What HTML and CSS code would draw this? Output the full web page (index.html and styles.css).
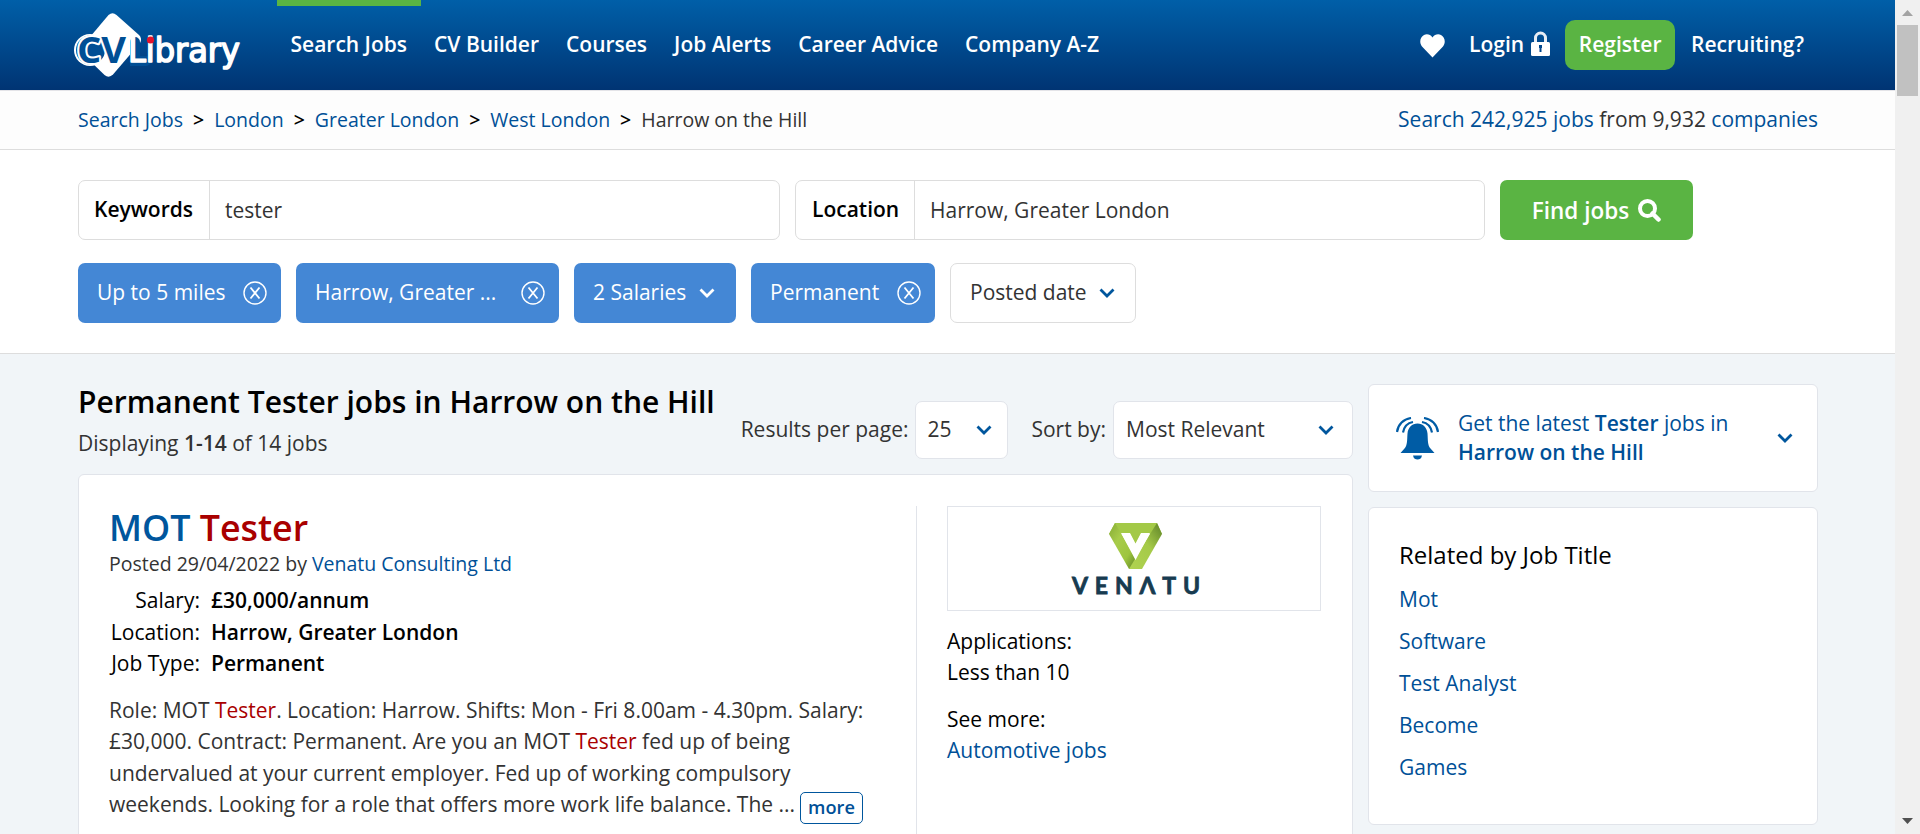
FILE: index.html
```
<!DOCTYPE html>
<html lang="en">
<head>
<meta charset="utf-8">
<title>Permanent Tester jobs in Harrow on the Hill</title>
<link rel="stylesheet" href="styles.css">
</head>
<body>
<svg width="0" height="0" class="defs">
  <symbol id="chev" viewBox="0 0 16 10"><path d="M1.500 1.500 8 8l6.500-6.500" fill="none" stroke="currentColor" stroke-width="2.800"/></symbol>
  <symbol id="close" viewBox="0 0 24 24"><circle cx="12" cy="12" r="11" fill="none" stroke="currentColor" stroke-width="1.400"/><path d="M7.500 6.500 16.500 17.500M16.500 6.500 7.500 17.500" stroke="currentColor" stroke-width="1.800"/></symbol>
</svg>
<div class="page">
  <header class="header">
    <div class="wrap header-row">
      <a class="logo">
        <svg width="172" height="68" viewBox="0 0 172 68">
          <path d="M34.500 2Q38.500-1.500 42.500 2L65 22Q68.500 25.500 66 30L39 61.500Q35 65.500 30.500 62L14 46 16 24Z" fill="#fff"/>
          <circle cx="16" cy="37" r="16" fill="#fff"/>
          <circle cx="16.500" cy="37" r="14.500" fill="#004f95"/>
          <path d="M61 29V48H72" fill="none" stroke="#004f95" stroke-width="10" stroke-linecap="round"/>
          <text x="3" y="49.500" class="logo-cv" textLength="49" lengthAdjust="spacingAndGlyphs">CV</text>
          <text x="54" y="49" class="logo-lib" textLength="112" lengthAdjust="spacingAndGlyphs">Library</text>
          <circle cx="76.500" cy="27" r="3.600" fill="#e2142d"/>
        </svg>
      </a>
      <nav class="nav">
        <a class="active">Search Jobs</a><a>CV Builder</a><a>Courses</a><a>Job Alerts</a><a>Career Advice</a><a>Company A-Z</a>
      </nav>
      <div class="account">
        <svg class="heart" width="25" height="24" viewBox="0 0 25 24"><path d="M12.500 23.500 2 12.500C-1 9 0 3 4 1c3-1.500 6.500-.5 8.500 2.500C14.500.5 18-.5 21 1c4 2 5 8 2 11.500Z" fill="#fff"/></svg>
        <a class="login">Login</a>
        <svg class="lock" width="19" height="25" viewBox="0 0 19 25"><path d="M4.500 12V7a5 5 0 0 1 10 0v5" fill="none" stroke="#e8edf5" stroke-width="3"/><rect y="11" width="19" height="14" rx="1.500" fill="#fff"/><path d="M8 14h3v3h-.5v4h-2v-4H8Z" fill="#00458b"/></svg>
        <a class="register">Register</a>
        <a>Recruiting?</a>
      </div>
    </div>
  </header>

  <div class="crumbs">
    <div class="wrap crumbs-row">
      <div class="trail"><a>Search Jobs</a><i>&gt;</i><a>London</a><i>&gt;</i><a>Greater London</a><i>&gt;</i><a>West London</a><i>&gt;</i><span>Harrow on the Hill</span></div>
      <div class="totals"><a>Search 242,925 jobs</a> from 9,932 <a>companies</a></div>
    </div>
  </div>

  <section class="search">
    <div class="wrap">
      <div class="fields">
        <div class="field keywords"><label>Keywords</label><span>tester</span></div>
        <div class="field location"><label>Location</label><span>Harrow, Greater London</span></div>
        <button class="find">Find jobs <svg width="23" height="23" viewBox="0 0 23 23"><circle cx="9.500" cy="9.500" r="7.500" fill="none" stroke="#fff" stroke-width="4"/><path d="M14.500 14.500 20.500 20.500" stroke="#fff" stroke-width="4.500" stroke-linecap="round"/></svg></button>
      </div>
      <div class="chips">
        <div class="chip c1">Up to 5 miles<svg class="x"><use href="#close"/></svg></div>
        <div class="chip c2">Harrow, Greater ...<svg class="x"><use href="#close"/></svg></div>
        <div class="chip c3">2 Salaries<svg class="v"><use href="#chev"/></svg></div>
        <div class="chip c4">Permanent<svg class="x"><use href="#close"/></svg></div>
        <div class="chip c5">Posted date<svg class="v"><use href="#chev"/></svg></div>
      </div>
    </div>
  </section>

  <main class="wrap main">
    <div class="results">
      <div class="results-head">
        <div>
          <h1>Permanent Tester jobs in Harrow on the Hill</h1>
          <p class="count">Displaying <b>1-14</b> of 14 jobs</p>
        </div>
        <div class="sorting">
          <span class="per">Results per page:</span><div class="select s1">25<svg class="v"><use href="#chev"/></svg></div>
          <span class="by">Sort by:</span><div class="select s2">Most Relevant<svg class="v"><use href="#chev"/></svg></div>
        </div>
      </div>
      <article class="job">
        <div class="job-main">
          <h2>MOT <mark>Tester</mark></h2>
          <p class="posted">Posted 29/04/2022 by <a>Venatu Consulting Ltd</a></p>
          <dl><dt>Salary:</dt><dd>£30,000/annum</dd><dt>Location:</dt><dd>Harrow, Greater London</dd><dt>Job Type:</dt><dd>Permanent</dd></dl>
          <div class="desc">Role: MOT <mark>Tester</mark>. Location: Harrow. Shifts: Mon - Fri 8.00am - 4.30pm. Salary:<br>£30,000. Contract: Permanent. Are you an MOT <mark>Tester</mark> fed up of being<br>undervalued at your current employer. Fed up of working compulsory<br>weekends. Looking for a role that offers more work life balance. The ...<a class="more">more</a></div>
        </div>
        <aside class="job-side">
          <div class="brand">
            <svg width="136" height="84" viewBox="0 0 136 84">
              <defs>
                <linearGradient id="ga" x1="0" y1="0" x2="1" y2="1"><stop offset="0" stop-color="#86ab35"/><stop offset=".35" stop-color="#a8cc4a"/><stop offset=".7" stop-color="#9dc53e"/><stop offset="1" stop-color="#5d8227"/></linearGradient>
                <linearGradient id="gb" x1="1" y1="0" x2="0" y2="1"><stop offset="0" stop-color="#5d8227"/><stop offset=".45" stop-color="#a5ca48"/><stop offset="1" stop-color="#b0d351"/></linearGradient>
              </defs>
              <path d="M49 2H91L96 13H43Z" fill="#a3c947"/>
              <path d="M49 2 43 13 63 48H70V38L55 12Z" fill="url(#ga)"/>
              <path d="M96 13 76 48H63L84 13 91 2Z" fill="url(#gb)"/>
              <path d="M63 11H76L69.500 24Z" fill="#a3c947"/>
              <path d="M55 12H64L69.500 22.500 75 12H84L69.500 39Z" fill="#fff"/>
              <text x="6" y="73" class="brand-name" textLength="128">VENΛTU</text>
            </svg>
          </div>
          <p>Applications:<br>Less than 10</p>
          <p>See more:<br><a>Automotive jobs</a></p>
        </aside>
      </article>
    </div>
    <div class="sidebar">
      <div class="alert">
        <svg width="43" height="43" viewBox="0 0 43 43" fill="none" stroke="#005ca5" stroke-width="2.200"><path d="M21.500 6.500c5.500 0 9.500 4 10 10 .5 7 0 11.500 3 15L38.500 36H4.500L8.500 31.500c3-3.500 2.500-8 3-15 .5-6 4.500-10 10-10Z" fill="#005ca5" stroke="none"/><path d="M17 38.500h9c-.5 3-2.500 4-4.500 4s-4-1-4.500-4Z" fill="#005ca5" stroke="none"/><path d="M1 15C2 7.500 7.500 2 15 1M7 15.500C8 10 11.500 6 17 5M42 15C41 7.500 35.500 2 28 1M36 15.500C35 10 31.500 6 26 5"/></svg>
        <div class="alert-text">Get the latest <b>Tester</b> jobs in<br><b>Harrow on the Hill</b></div>
        <svg class="v"><use href="#chev"/></svg>
      </div>
      <div class="related">
        <h3>Related by Job Title</h3>
        <a>Mot</a><a>Software</a><a>Test Analyst</a><a>Become</a><a>Games</a>
      </div>
    </div>
  </main>
</div>
<div class="scrollbar">
  <svg width="11" height="6" viewBox="0 0 11 6"><path d="M0 6 5.500 0 11 6Z" fill="#a3a3a3"/></svg>
  <div class="thumb"></div>
  <svg class="down" width="11" height="6" viewBox="0 0 11 6"><path d="M0 0 5.500 6 11 0Z" fill="#505050"/></svg>
</div>
</body>
</html>
```
FILE: styles.css
```
* { box-sizing: border-box; margin: 0; padding: 0; }
html { height: 834px; overflow: hidden; }
body { display: flex; height: 834px; overflow: hidden; font: 21px/31.25px "Open Sans", sans-serif; color: #333; }
.defs { position: absolute; }
a { color: #005097; text-decoration: none; }
b { font-weight: 600; }
svg { display: block; flex: none; }
mark { background: none; color: #a90000; }
.page { width: 1895px; height: 834px; overflow: hidden; background: #f1f5f8; }
.wrap { width: 1740px; margin-left: 78px; }

.header { height: 90px; background: linear-gradient(#005fa8, #003473); }
.header-row { display: flex; height: 90px; }
.header a { color: #fff; font-weight: 600; white-space: nowrap; }
.logo { width: 199px; padding-top: 13px; }
.logo svg { margin-left: -4px; overflow: visible; }
.logo-cv { font: 700 36px "Open Sans", sans-serif; fill: #004f95; stroke: #fff; stroke-width: 4px; stroke-linejoin: round; paint-order: stroke; }
.logo-lib { font: 33px "DejaVu Sans", sans-serif; fill: #fff; stroke: #fff; stroke-width: 1.600px; stroke-linejoin: round; }
.nav { display: flex; }
.nav a { padding: 29px 13.500px 0; border-top: 0 solid #5ab443; }
.nav a.active { border-top-width: 6px; padding-top: 23px; }
.account { display: flex; align-items: center; margin-left: auto; margin-right: 14px; }
.heart { margin: 2px 24px 0 0; }
.lock { margin: -3px 15px 0 7px; }
.register { height: 50px; width: 110px; margin-right: 16px; border-radius: 10px; background: #5ab443; line-height: 49px; text-align: center; }

.crumbs { height: 60px; background: #fdfdfd; border-top: 1px solid #e4e4e8; border-bottom: 1px solid #ddd; }
.crumbs-row { display: flex; justify-content: space-between; line-height: 58px; }
.trail { font-size: 19.500px; }
.trail i { margin: 0 10px; font-style: normal; font-weight: 600; color: #000; }
.totals { line-height: 57px; }

.search { height: 204px; padding-top: 30px; background: #fff; border-bottom: 1px solid #ddd; }
.fields { display: flex; gap: 15px; height: 60px; }
.field { display: flex; border: 1px solid #ddd; border-radius: 7px; line-height: 58px; }
.field label { flex: none; padding-left: 15px; border-right: 1px solid #ddd; color: #000; font-size: 21px; font-weight: 600; line-height: 56px; }
.field span { padding-left: 15px; }
.keywords { width: 702px; }
.keywords label { width: 131px; }
.location { width: 690px; }
.location label { width: 119px; padding-left: 16px; }
.find { display: flex; align-items: center; justify-content: center; gap: 9px; width: 193px; border: 0; border-radius: 7px; background: #5ab443; color: #fff; font: 600 22.500px "Open Sans", sans-serif; }
.chips { display: flex; gap: 15px; margin-top: 23px; }
.chip { display: flex; align-items: center; justify-content: space-between; height: 60px; padding: 0 14px 0 19px; border-radius: 7px; background: #4487d5; color: #fff; white-space: nowrap; }
.x { width: 24px; height: 24px; margin-top: -1px; }
.v { width: 16px; height: 10px; color: #00569d; }
.c1 { width: 203px; }
.c2 { width: 263px; }
.c3 { width: 162px; padding-right: 21px; }
.c3 .v { color: #fff; }
.c4 { width: 184px; }
.c5 { width: 186px; padding-right: 20px; border: 1px solid #ddd; background: #fff; color: #333; }

.main { display: flex; gap: 15px; }
.results { width: 1275px; }
.results-head { display: flex; justify-content: space-between; height: 120px; }
h1 { margin-top: 28px; font-size: 30px; font-weight: 600; line-height: 40px; color: #000; white-space: nowrap; }
.count { margin-top: 6px; }
.sorting { display: flex; align-items: center; height: 58px; margin-top: 47px; white-space: nowrap; }
.select { display: flex; align-items: center; justify-content: space-between; height: 58px; padding: 0 18px 0 12px; border: 1px solid #e1e4ea; border-radius: 7px; background: #fff; }
.select .v { margin-top: -1px; }
.per { margin-right: 7px; }
.by { margin: 0 7px 0 23px; }
.s1 { width: 93px; padding: 0 15px 0 11px; }
.s2 { width: 240px; }
.job { display: flex; height: 500px; padding: 31px 31px 31px 30px; border: 1px solid #e1e4ea; border-radius: 6px; background: #fff; }
.job-main { width: 808px; border-right: 1px solid #e1e4ea; }
h2 { font-size: 35.800px; font-weight: 600; line-height: 42px; color: #00569d; }
.posted { font-size: 19.500px; }
dl { display: grid; grid-template-columns: 91px 1fr; column-gap: 11px; margin-top: 6px; color: #000; }
dt { text-align: right; white-space: nowrap; }
dd { font-weight: 600; }
.desc { margin-top: 16px; white-space: nowrap; }
.more { display: inline-block; height: 32px; margin-left: 5px; padding: 0 7px; border: 1px solid #00569d; border-radius: 5px; font-weight: 600; font-size: 18.200px; line-height: 29px; vertical-align: -2px; }
.job-side { width: 404px; padding-left: 30px; color: #000; }
.brand { display: flex; justify-content: center; width: 374px; height: 105px; padding-top: 14px; border: 1px solid #e1e4ea; }
.brand-name { font: 700 23px Lato, sans-serif; fill: #173b50; stroke: #173b50; stroke-width: .8px; }
.job-side p { margin-top: 15.500px; }
.job-side .brand + p { margin-top: 14.500px; }
.sidebar { width: 450px; padding-top: 30px; }
.alert { display: flex; align-items: center; height: 108px; padding: 0 24px 0 27px; border: 1px solid #e1e4ea; border-radius: 6px; background: #fff; }
.alert-text { width: 319px; margin-left: 19px; color: #005097; line-height: 29px; }
.related { height: 318px; margin-top: 15px; padding: 29px 30px; border: 1px solid #e1e4ea; border-radius: 6px; background: #fff; }
h3 { margin-bottom: 5px; font-size: 24px; font-weight: 400; line-height: 36px; color: #000; }
.related a { display: block; line-height: 42px; }

.scrollbar { display: flex; flex-direction: column; align-items: center; width: 25px; padding: 10px 0; background: #f0f0f0; }
.thumb { width: 21px; height: 71px; margin-top: 9px; background: #c1c1c1; }
.down { margin-top: auto; }
```
